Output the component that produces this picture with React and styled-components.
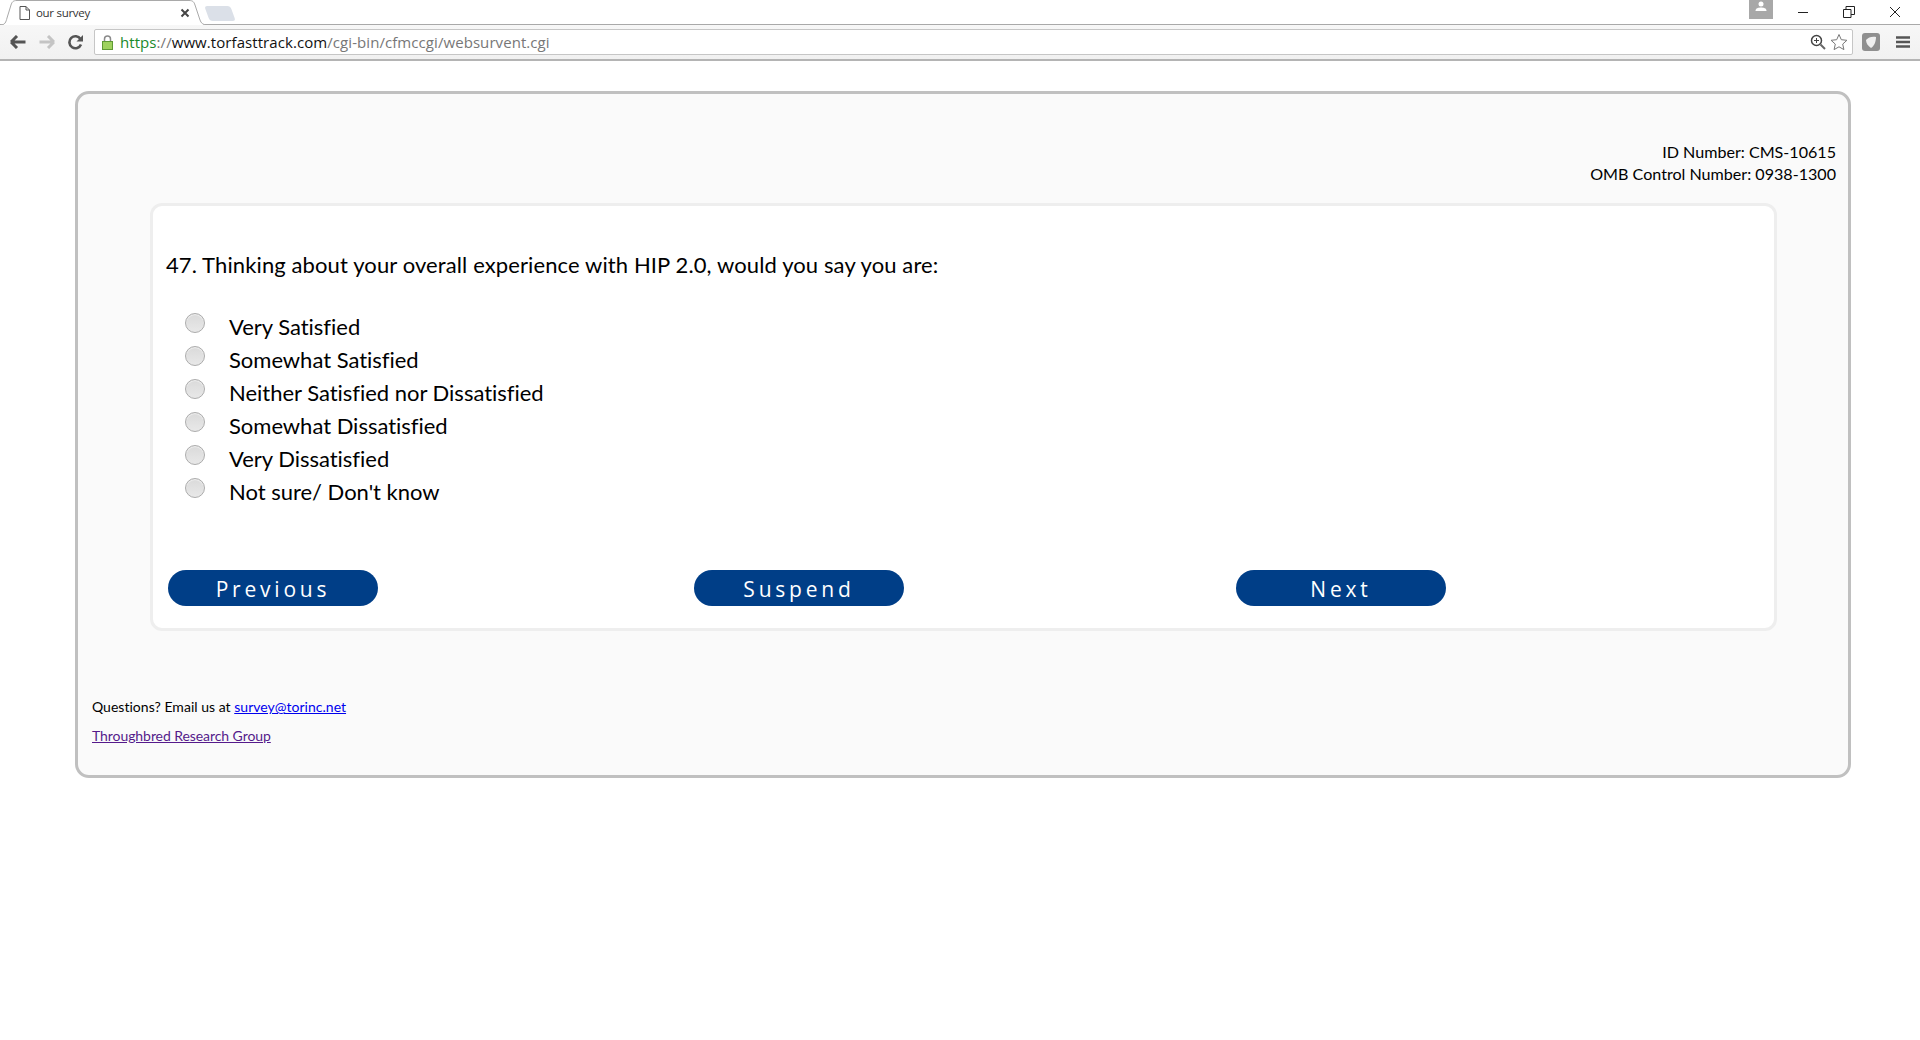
import React from 'react';
import styled, { createGlobalStyle } from 'styled-components';

const Global = createGlobalStyle`
  html, body { margin: 0; padding: 0; background: #fff; }
  body { font-family: Lato, "Liberation Sans", sans-serif; color: #000; }
`;

const Page = styled.div`
  width: 1920px;
  height: 1040px;
  overflow: hidden;
  background: #fff;
`;

/* browser chrome */
const TabStrip = styled.div`
  height: 24px;
  display: flex;
  align-items: flex-end;
  padding-left: 5px;
  border-bottom: 1px solid #a9a9a9;
`;

const Tab = styled.div`
  position: relative;
  width: 196px;
  height: 25px;
  margin-bottom: -1px;
  display: flex;
  align-items: center;
  padding-left: 14px;
  box-sizing: border-box;
  font-family: "Open Sans", sans-serif;
  font-size: 11.5px;
  letter-spacing: -0.3px;
  color: #333;
  z-index: 1;
`;

const TabShape = styled.svg`
  position: absolute;
  left: -5px;
  top: 0;
  z-index: -1;
`;

const TabTitle = styled.span`
  margin-left: 6px;
  flex: 1;
`;

const NewTab = styled.div`
  width: 26px;
  height: 15px;
  margin: 0 0 3px 6px;
  background: #dbe0e8;
  border-radius: 3px;
  transform: skewX(20deg);
`;

const WindowControls = styled.div`
  margin-left: auto;
  align-self: flex-start;
  display: flex;
  align-items: flex-start;
  padding-right: 2px;
`;

const Profile = styled.div`
  width: 24px;
  height: 19px;
  background: #a8a8a8;
  display: flex;
  justify-content: center;
  margin-right: 7px;
`;

const WinButton = styled.div`
  width: 46px;
  height: 24px;
  display: flex;
  align-items: center;
  justify-content: center;
`;

const Toolbar = styled.div`
  height: 34px;
  display: flex;
  align-items: center;
  padding-left: 8px;
  background: linear-gradient(#f7f7f7, #f1f1f1);
  border-bottom: 2px solid #b4b4b4;
`;

const NavButton = styled.div`
  width: 29px;
  height: 26px;
  display: flex;
  align-items: center;
  justify-content: center;
  flex: none;
  margin-left: ${({ $first }) => ($first ? '-5px' : '0')};
`;

const AddressBar = styled.div`
  width: 1759px;
  height: 26px;
  margin-left: 4px;
  box-sizing: border-box;
  border: 1px solid #c6c6c6;
  border-radius: 2px;
  background: #fff;
  display: flex;
  align-items: center;
  padding: 0 4px 0 7px;
  flex: none;
  font-family: "Open Sans", sans-serif;
  font-size: 15px;
  letter-spacing: 0.07px;
  white-space: nowrap;
`;

const Url = styled.span`
  margin-left: 7px;
  color: #777;
`;
const Scheme = styled.span`
  color: #1a8a2b;
`;
const Host = styled.span`
  color: #111;
`;

const AddressIcons = styled.div`
  margin-left: auto;
  display: flex;
  align-items: center;
  gap: 4px;
`;

const ToolIcon = styled.div`
  display: flex;
  align-items: center;
  justify-content: center;
  flex: none;
  margin-left: ${({ $gap }) => $gap}px;
`;

/* survey */
const Panel = styled.div`
  box-sizing: border-box;
  width: 1776px;
  height: 687px;
  margin: 30px 0 0 75px;
  padding: 47px 11px 0 11px;
  background: #fafafa;
  border: 3px solid #c0c0c0;
  border-radius: 14px;
`;

const IdBlock = styled.div`
  text-align: right;
  font-size: 16.1px;
  line-height: 22px;
  padding-right: 1px;
`;

const Card = styled.div`
  box-sizing: border-box;
  width: 1627px;
  height: 428px;
  margin: 18px 0 0 61px;
  padding: 44px 12px 0 13px;
  background: #fff;
  border: 3px solid #eee;
  border-radius: 12px;
`;

const Question = styled.div`
  font-size: 22px;
  line-height: 30px;
  letter-spacing: 0.11px;
`;

const Options = styled.div`
  margin-top: 30px;
  display: flex;
  flex-direction: column;
`;

const OptionRow = styled.label`
  height: 33px;
  display: flex;
  align-items: center;
  padding-left: 19px;
  font-size: 22px;
  letter-spacing: -0.02px;
`;

const Radio = styled.span`
  width: 20px;
  height: 20px;
  box-sizing: border-box;
  border-radius: 50%;
  border: 1px solid #acacac;
  background: linear-gradient(#dadada, #e8e8e8);
  box-shadow: inset 0 1px 1px rgba(255, 255, 255, 0.6);
  flex: none;
  margin: -8px 24px 0 0;
`;

const OptionText = styled.span`
  position: relative;
  top: 0;
`;

const Actions = styled.div`
  margin-top: 62px;
  display: grid;
  grid-template-columns: 526px 542px 210px;
  padding-left: 2px;
`;

const ActionButton = styled.button`
  width: 210px;
  height: 36px;
  border: 0;
  border-radius: 18px;
  padding: 2px 0 0;
  background: #003e87;
  color: #fff;
  font-family: "Open Sans", sans-serif;
  font-size: 21px;
  font-weight: 500;
  letter-spacing: 3.8px;
`;

const Footer = styled.div`
  margin: 68px 0 0 3px;
  font-size: 14px;
  line-height: 16px;
  letter-spacing: 0.02px;
`;

const FooterLine = styled.div`
  margin-bottom: 13px;
`;

const MailLink = styled.a`
  color: #0000ee;
`;

const VisitedLink = styled.a`
  color: #551a8b;
  letter-spacing: -0.07px;
`;

const options = [
  'Very Satisfied',
  'Somewhat Satisfied',
  'Neither Satisfied nor Dissatisfied',
  'Somewhat Dissatisfied',
  'Very Dissatisfied',
  "Not sure/ Don't know",
];

export default function App() {
  return (
    <Page>
      <Global />
      <TabStrip>
        <Tab>
          <TabShape width="210" height="25" viewBox="0 0 210 25">
            <path d="M0.5 25 C5 25 6 22 7 18 L11 5 C12 2 13 0.5 17 0.5 L189 0.5 C193 0.5 194 2 195 5 L200 20 C201 23 203 25 207 25" fill="#fff" stroke="#a9a9a9" />
          </TabShape>
          <svg width="11" height="14" viewBox="0 0 11 14">
            <path d="M1 .5h6l3.500 3.500v9.500h-9.500z M7 .5v3.500h3.500" fill="#fff" stroke="#555" />
          </svg>
          <TabTitle>our survey</TabTitle>
          <svg width="10" height="10" viewBox="0 0 10 10" style={{ marginRight: 11 }}>
            <path d="M1.500 1.500l7 7M8.500 1.500l-7 7" stroke="#444" strokeWidth="2" />
          </svg>
        </Tab>
        <NewTab />
        <WindowControls>
          <Profile>
            <svg width="14" height="14" viewBox="0 0 14 14">
              <circle cx="7" cy="4" r="2.500" fill="#fff" />
              <path d="M1.500 11c0-3 3-3.500 5.500-3.500s5.500.5 5.500 3.500z" fill="#fff" />
            </svg>
          </Profile>
          <WinButton>
            <svg width="12" height="12" viewBox="0 0 12 12">
              <path d="M1 6.500h10" stroke="#222" strokeWidth="1" />
            </svg>
          </WinButton>
          <WinButton>
            <svg width="12" height="12" viewBox="0 0 12 12">
              <path d="M.5 3.500h7.500v8h-7.500z M3 3.500v-3h8.500v8h-3.500" fill="none" stroke="#222" />
            </svg>
          </WinButton>
          <WinButton>
            <svg width="12" height="12" viewBox="0 0 12 12">
              <path d="M1 1l10 10M11 1l-10 10" stroke="#222" />
            </svg>
          </WinButton>
        </WindowControls>
      </TabStrip>
      <Toolbar>
        <NavButton $first>
          <svg width="16" height="14" viewBox="0 0 16 14">
            <path d="M1 7l6-6M1 7l6 6M1.500 7h14" stroke="#555" strokeWidth="3" fill="none" />
          </svg>
        </NavButton>
        <NavButton>
          <svg width="16" height="14" viewBox="0 0 16 14">
            <path d="M15 7l-6-6M15 7l-6 6M14.500 7h-14" stroke="#c4c4c4" strokeWidth="3" fill="none" />
          </svg>
        </NavButton>
        <NavButton>
          <svg width="16" height="16" viewBox="0 0 16 16">
            <path d="M13 10.500a6 6 0 1 1-.5-5.500" stroke="#555" strokeWidth="2.600" fill="none" />
            <path d="M15 1v6.500h-6.500z" fill="#555" />
          </svg>
        </NavButton>
        <AddressBar>
          <svg width="11" height="15" viewBox="0 0 11 15">
            <path d="M2.500 7v-3a3 3 0 0 1 6 0v3" fill="none" stroke="#8a8a8a" strokeWidth="1.500" />
            <rect x=".5" y="6.500" width="10" height="8" fill="#9fd25f" stroke="#5f9a35" />
          </svg>
          <Url>
            <Scheme>https</Scheme>://<Host>www.torfasttrack.com</Host>/cgi-bin/cfmccgi/websurvent.cgi
          </Url>
          <AddressIcons>
            <svg width="16" height="16" viewBox="0 0 16 16">
              <circle cx="6.500" cy="6.500" r="5" fill="none" stroke="#444" strokeWidth="1.500" />
              <path d="M10.500 10.500l4.500 4.500" stroke="#666" strokeWidth="2" />
              <path d="M4 6.500h5M6.500 4v5" stroke="#444" />
            </svg>
            <svg width="18" height="18" viewBox="0 0 18 18">
              <path d="M9 1.500l2.300 5.200 5.600.6-4.200 3.800 1.200 5.500L9 13.800l-4.900 2.800 1.200-5.500L1.100 7.300l5.600-.6z" fill="none" stroke="#777" />
            </svg>
          </AddressIcons>
        </AddressBar>
        <ToolIcon $gap={9}>
          <svg width="18" height="18" viewBox="0 0 18 18">
            <rect width="18" height="18" rx="3" fill="#8f8f8f" />
            <path d="M4 7c2-3 7-4 10-3 0 5-2 9-5 11-3-2-5-5-5-8z" fill="#efefef" />
          </svg>
        </ToolIcon>
        <ToolIcon $gap={16}>
          <svg width="14" height="14" viewBox="0 0 14 14">
            <path d="M0 2.500h14M0 7h14M0 11.500h14" stroke="#555" strokeWidth="2.600" />
          </svg>
        </ToolIcon>
      </Toolbar>
      <Panel>
        <IdBlock>
          ID Number: CMS-10615
          <br />
          OMB Control Number: 0938-1300
        </IdBlock>
        <Card>
          <Question>47. Thinking about your overall experience with HIP 2.0, would you say you are:</Question>
          <Options>
            {options.map((label) => (
              <OptionRow key={label}>
                <Radio />
                <OptionText>{label}</OptionText>
              </OptionRow>
            ))}
          </Options>
          <Actions>
            <ActionButton>Previous</ActionButton>
            <ActionButton>Suspend</ActionButton>
            <ActionButton>Next</ActionButton>
          </Actions>
        </Card>
        <Footer>
          <FooterLine>
            Questions? Email us at <MailLink href="#survey">survey@torinc.net</MailLink>
          </FooterLine>
          <FooterLine>
            <VisitedLink href="#group">Throughbred Research Group</VisitedLink>
          </FooterLine>
        </Footer>
      </Panel>
    </Page>
  );
}
